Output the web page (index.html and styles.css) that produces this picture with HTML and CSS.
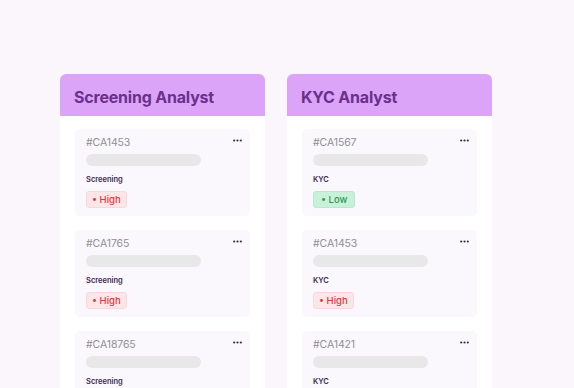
FILE: index.html
```html
<!DOCTYPE html>
<html lang="en">
<head>
    <meta charset="UTF-8">
    <meta name="viewport" content="width=device-width, initial-scale=1.0">
    <title>Case Board</title>
    <link rel="stylesheet" href="styles.css">
</head>
<body>

    <div class="board">
        <div class="column">
            <div class="column-head">Screening Analyst</div>
            <div class="column-body">
                <div class="card">
                    <div class="card-top">
                        <span class="case-id">#CA1453</span>
                        <svg class="more" width="9" height="3" viewBox="0 0 9 3"><circle cx="1.2" cy="1.5" r="1.1"/><circle cx="4.5" cy="1.5" r="1.1"/><circle cx="7.8" cy="1.5" r="1.1"/></svg>
                    </div>
                    <div class="skeleton"></div>
                    <div class="stage">Screening</div>
                    <span class="badge high">• High</span>
                </div>
                <div class="card">
                    <div class="card-top">
                        <span class="case-id">#CA1765</span>
                        <svg class="more" width="9" height="3" viewBox="0 0 9 3"><circle cx="1.2" cy="1.5" r="1.1"/><circle cx="4.5" cy="1.5" r="1.1"/><circle cx="7.8" cy="1.5" r="1.1"/></svg>
                    </div>
                    <div class="skeleton"></div>
                    <div class="stage">Screening</div>
                    <span class="badge high">• High</span>
                </div>
                <div class="card">
                    <div class="card-top">
                        <span class="case-id">#CA18765</span>
                        <svg class="more" width="9" height="3" viewBox="0 0 9 3"><circle cx="1.2" cy="1.5" r="1.1"/><circle cx="4.5" cy="1.5" r="1.1"/><circle cx="7.8" cy="1.5" r="1.1"/></svg>
                    </div>
                    <div class="skeleton"></div>
                    <div class="stage">Screening</div>
                    <span class="badge high">• High</span>
                </div>
            </div>
        </div>

        <div class="column">
            <div class="column-head">KYC Analyst</div>
            <div class="column-body">
                <div class="card">
                    <div class="card-top">
                        <span class="case-id">#CA1567</span>
                        <svg class="more" width="9" height="3" viewBox="0 0 9 3"><circle cx="1.2" cy="1.5" r="1.1"/><circle cx="4.5" cy="1.5" r="1.1"/><circle cx="7.8" cy="1.5" r="1.1"/></svg>
                    </div>
                    <div class="skeleton"></div>
                    <div class="stage">KYC</div>
                    <span class="badge low">• Low</span>
                </div>
                <div class="card">
                    <div class="card-top">
                        <span class="case-id">#CA1453</span>
                        <svg class="more" width="9" height="3" viewBox="0 0 9 3"><circle cx="1.2" cy="1.5" r="1.1"/><circle cx="4.5" cy="1.5" r="1.1"/><circle cx="7.8" cy="1.5" r="1.1"/></svg>
                    </div>
                    <div class="skeleton"></div>
                    <div class="stage">KYC</div>
                    <span class="badge high">• High</span>
                </div>
                <div class="card">
                    <div class="card-top">
                        <span class="case-id">#CA1421</span>
                        <svg class="more" width="9" height="3" viewBox="0 0 9 3"><circle cx="1.2" cy="1.5" r="1.1"/><circle cx="4.5" cy="1.5" r="1.1"/><circle cx="7.8" cy="1.5" r="1.1"/></svg>
                    </div>
                    <div class="skeleton"></div>
                    <div class="stage">KYC</div>
                    <span class="badge high">• High</span>
                </div>
            </div>
        </div>
    </div>

</body>
</html>
```

FILE: styles.css
```css
html, body {
    margin: 0;
    height: 100%;
    overflow: hidden;
}
body {
    background: #fbf5fc;
    font-family: Inter, "Noto Sans", sans-serif;
}
/* Tablero de columnas */
.board {
    display: flex;
    gap: 22px;
    padding: 74px 0 0 60px;
}
.column {
    width: 205px;
    display: flex;
    flex-direction: column;
}
.column-head {
    height: 42px;
    line-height: 46px;
    padding-left: 14px;
    background: #dca4f9;
    color: #6b2f8c;
    font-size: 16px;
    font-weight: 700;
    letter-spacing: -0.2px;
    border-radius: 6px 6px 0 0;
}
.column-body {
    background: #fff;
    padding: 13px 15px 20px;
    display: flex;
    flex-direction: column;
    gap: 14px;
}
/* Tarjeta de caso */
.card {
    height: 87px;
    box-sizing: border-box;
    padding: 6px 11px 0;
    background: #faf7fd;
    border-radius: 5px;
}
.card-top {
    display: flex;
    justify-content: space-between;
    align-items: center;
    height: 14px;
}
.case-id {
    font-size: 10.5px;
    color: #909090;
    letter-spacing: -0.1px;
}
.more {
    fill: #333;
    margin-right: -3px;
    margin-top: -4px;
}
.skeleton {
    margin-top: 5px;
    width: 115px;
    height: 12px;
    border-radius: 6px;
    background: #e8e8e8;
}
.stage {
    margin-top: 9px;
    height: 10px;
    line-height: 10px;
    font-size: 7.5px;
    font-weight: 600;
    color: #3b2a4c;
}
.badge {
    display: inline-block;
    margin-top: 6px;
    height: 17px;
    line-height: 15px;
    box-sizing: border-box;
    padding: 0 5px;
    font-size: 9.5px;
    font-weight: 500;
    border-radius: 3px;
    border: 1px solid transparent;
}
.badge.high {
    background: #fee6e8;
    border-color: #fbd7da;
    color: #dc3a40;
}
.badge.low {
    background: #c9f0d9;
    border-color: #b8e9cb;
    color: #2f9a59;
    padding: 0 7px;
}
```
